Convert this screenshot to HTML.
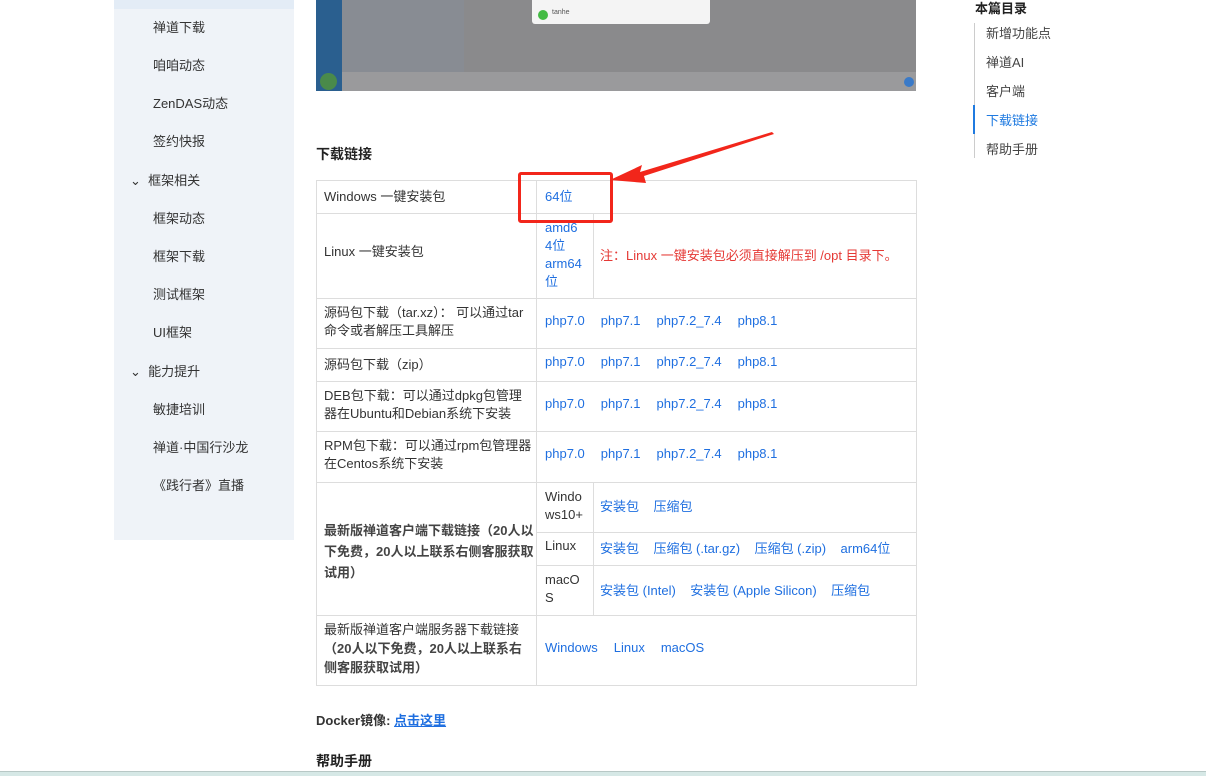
<!DOCTYPE html>
<html><head><meta charset="utf-8"><style>
*{margin:0;padding:0;box-sizing:border-box}
body{width:1206px;height:776px;overflow:hidden;background:#fff;font-family:"Liberation Sans","Noto Sans CJK SC",sans-serif;font-size:13px;color:#333;position:relative}
.a{position:absolute;white-space:nowrap;margin-top:-2px}
.side{position:absolute;left:114px;top:0;width:180px;height:540px;background:#eff3f8}
.side .a{color:#333}
.l{color:#1f6fe0}
.h{position:absolute;background:#ddd}
.v{position:absolute;background:#ddd;width:1px}
.toc{color:#444}
.p span{margin-right:16px}
</style></head><body>
<div class="side">
<div style="position:absolute;left:0;top:0;width:180px;height:9px;background:#e3ecf6"></div>
<div class="a" style="left:39px;top:19px">禅道下载</div>
<div class="a" style="left:39px;top:57px">咱咱动态</div>
<div class="a" style="left:39px;top:95px">ZenDAS动态</div>
<div class="a" style="left:39px;top:133px">签约快报</div>
<div class="a" style="left:16px;top:172px">⌄&nbsp; 框架相关</div>
<div class="a" style="left:39px;top:210px">框架动态</div>
<div class="a" style="left:39px;top:248px">框架下载</div>
<div class="a" style="left:39px;top:286px">测试框架</div>
<div class="a" style="left:39px;top:324px">UI框架</div>
<div class="a" style="left:16px;top:363px">⌄&nbsp; 能力提升</div>
<div class="a" style="left:39px;top:401px">敏捷培训</div>
<div class="a" style="left:39px;top:439px">禅道·中国行沙龙</div>
<div class="a" style="left:39px;top:477px">《践行者》直播</div>
</div>

<div style="position:absolute;left:316px;top:0;width:600px;height:91px;background:#8a8a8c">
<div style="position:absolute;left:0;top:0;width:26px;height:91px;background:#2a5f8f"></div>
<div style="position:absolute;left:26px;top:0;width:122px;height:72px;background:#888c93"></div>
<div style="position:absolute;left:26px;top:72px;width:574px;height:19px;background:#9a9a9c"></div>
<div style="position:absolute;left:4px;top:73px;width:17px;height:17px;border-radius:50%;background:#4a8a4a"></div>
<div style="position:absolute;left:216px;top:0;width:178px;height:24px;background:#f4f4f4;border-radius:0 0 3px 3px"></div>
<div style="position:absolute;left:222px;top:10px;width:10px;height:10px;border-radius:50%;background:#4b4"></div>
<div style="position:absolute;left:236px;top:9px;font-size:7px;color:#555">tanhe</div>
<div style="position:absolute;left:588px;top:77px;width:10px;height:10px;border-radius:50%;background:#3a7ac8"></div>
</div>

<div class="a" style="left:316px;top:146px;font-size:14px;font-weight:bold;color:#222">下载链接</div>

<div style="position:absolute;left:316px;top:180px;width:601px;height:506px;border:1px solid #ddd"></div>
<div class="v" style="left:536px;top:180px;height:506px"></div>
<div class="v" style="left:593px;top:213px;height:86px"></div>
<div class="v" style="left:593px;top:482px;height:133px"></div>
<div class="h" style="left:316px;top:213px;width:601px;height:1px"></div>
<div class="h" style="left:316px;top:298px;width:601px;height:1px"></div>
<div class="h" style="left:316px;top:348px;width:601px;height:1px"></div>
<div class="h" style="left:316px;top:381px;width:601px;height:1px"></div>
<div class="h" style="left:316px;top:431px;width:601px;height:1px"></div>
<div class="h" style="left:316px;top:482px;width:601px;height:1px"></div>
<div class="h" style="left:537px;top:532px;width:380px;height:1px"></div>
<div class="h" style="left:537px;top:565px;width:380px;height:1px"></div>
<div class="h" style="left:316px;top:615px;width:601px;height:1px"></div>

<div class="a" style="left:324px;top:188px">Windows 一键安装包</div>
<div class="a l" style="left:545px;top:188px">64位</div>
<div class="a" style="left:324px;top:243px">Linux 一键安装包</div>
<div class="a l" style="left:545px;top:221px;line-height:18px">amd6<br>4位<br>arm64<br>位</div>
<div class="a" style="left:600px;top:247px;color:#e53935">注：Linux 一键安装包必须直接解压到 /opt 目录下。</div>

<div class="a" style="left:324px;top:306px;line-height:18px">源码包下载（tar.xz）： 可以通过tar<br>命令或者解压工具解压</div>
<div class="a l p" style="left:545px;top:315px"><span>php7.0</span><span>php7.1</span><span>php7.2_7.4</span><span>php8.1</span></div>
<div class="a" style="left:324px;top:356px">源码包下载（zip）</div>
<div class="a l p" style="left:545px;top:356px"><span>php7.0</span><span>php7.1</span><span>php7.2_7.4</span><span>php8.1</span></div>
<div class="a" style="left:324px;top:389px;line-height:18px">DEB包下载：可以通过dpkg包管理<br>器在Ubuntu和Debian系统下安装</div>
<div class="a l p" style="left:545px;top:398px"><span>php7.0</span><span>php7.1</span><span>php7.2_7.4</span><span>php8.1</span></div>
<div class="a" style="left:324px;top:439px;line-height:18px">RPM包下载：可以通过rpm包管理器<br>在Centos系统下安装</div>
<div class="a l p" style="left:545px;top:448px"><span>php7.0</span><span>php7.1</span><span>php7.2_7.4</span><span>php8.1</span></div>

<div class="a" style="left:324px;top:522px;line-height:21px;font-weight:bold;color:#444">最新版禅道客户端下载链接（20人以<br>下免费，20人以上联系右侧客服获取<br>试用）</div>
<div class="a" style="left:545px;top:490px;line-height:18px">Windo<br>ws10+</div>
<div class="a l" style="left:600px;top:498px">安装包&nbsp;&nbsp;&nbsp; 压缩包</div>
<div class="a" style="left:545px;top:540px">Linux</div>
<div class="a l" style="left:600px;top:540px">安装包&nbsp;&nbsp;&nbsp; 压缩包 (.tar.gz)&nbsp;&nbsp;&nbsp; 压缩包 (.zip)&nbsp;&nbsp;&nbsp; arm64位</div>
<div class="a" style="left:545px;top:573px;line-height:18px">macO<br>S</div>
<div class="a l" style="left:600px;top:582px">安装包 (Intel)&nbsp;&nbsp;&nbsp; 安装包 (Apple Silicon)&nbsp;&nbsp;&nbsp; 压缩包</div>

<div class="a" style="left:324px;top:622px;line-height:19px">最新版禅道客户端服务器下载链接<br><b style="color:#444">（20人以下免费，20人以上联系右<br>侧客服获取试用）</b></div>
<div class="a l p" style="left:545px;top:642px"><span>Windows</span><span>Linux</span><span>macOS</span></div>

<div class="a" style="left:316px;top:712px;font-weight:bold;color:#333">Docker镜像: <span class="l" style="text-decoration:underline">点击这里</span></div>
<div class="a" style="left:316px;top:753px;font-size:14px;font-weight:bold;color:#222">帮助手册</div>
<div style="position:absolute;left:0;top:771px;width:1206px;height:5px;background:#d6e8e6;border-top:1px solid #b8c8c6"></div>

<div style="position:absolute;left:518px;top:172px;width:95px;height:51px;border:3px solid #f2261b;border-radius:3px"></div>
<svg style="position:absolute;left:600px;top:128px" width="180" height="60"><polygon points="172,4 40,44 42,37 10,52 46,55 44,48 174,6" fill="#f2261b"/></svg>

<div class="a" style="left:975px;top:0px;font-weight:bold;color:#222;font-size:13px">本篇目录</div>
<div style="position:absolute;left:974px;top:23px;width:1px;height:135px;background:#ccc"></div>
<div style="position:absolute;left:973px;top:105px;width:2px;height:29px;background:#1f7ae0"></div>
<div class="a toc" style="left:986px;top:25px">新增功能点</div>
<div class="a toc" style="left:986px;top:54px">禅道AI</div>
<div class="a toc" style="left:986px;top:83px">客户端</div>
<div class="a" style="left:986px;top:112px;color:#1f7ae0">下载链接</div>
<div class="a toc" style="left:986px;top:141px">帮助手册</div>
</body></html>
